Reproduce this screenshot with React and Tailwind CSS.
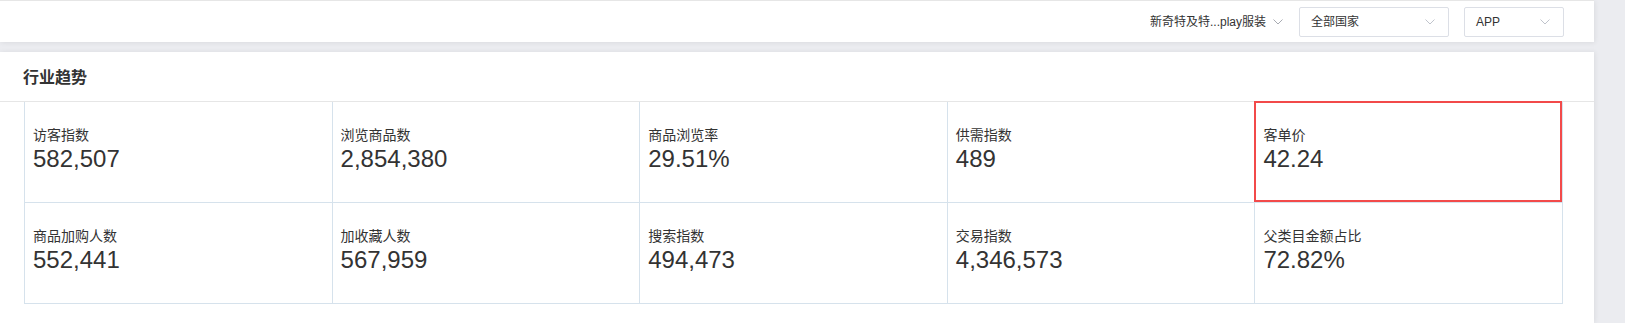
import React from "react";

const font = { fontFamily: '"Liberation Sans", "Noto Sans CJK SC", sans-serif' };

function Chevron({ color = "#c0c4cc" }) {
  return (
    <svg width="10" height="6" viewBox="0 0 10 6" fill="none">
      <path d="M0.5 0.5 L5 5 L9.5 0.5" stroke={color} strokeWidth="1" />
    </svg>
  );
}

const metrics = [
  ["访客指数", "582,507"],
  ["浏览商品数", "2,854,380"],
  ["商品浏览率", "29.51%"],
  ["供需指数", "489"],
  ["客单价", "42.24", true],
  ["商品加购人数", "552,441"],
  ["加收藏人数", "567,959"],
  ["搜索指数", "494,473"],
  ["交易指数", "4,346,573"],
  ["父类目金额占比", "72.82%"],
];

export default function App() {
  return (
    <div className="h-[323px] w-full overflow-hidden bg-[#ebecf0]" style={font}>
      <div className="flex w-[1594px] flex-col">
        <div className="flex h-[42px] items-start justify-end border-t border-[#e6e6e6] bg-white pt-[6px] pr-[30px] shadow-[1px_1px_5px_rgba(0,0,0,0.07)]">
          <div className="flex h-[30px] items-center gap-[7px] text-[12px] text-[#333]">
            <span>新奇特及特...play服装</span>
            <Chevron color="#a8abb2" />
          </div>
          <div className="ml-[16px] flex h-[30px] w-[150px] items-center justify-between rounded-[2px] border border-[#dcdfe6] pl-[11px] pr-[13px] text-[12px] text-[#333]">
            <span>全部国家</span>
            <Chevron />
          </div>
          <div className="ml-[15px] flex h-[30px] w-[100px] items-center justify-between rounded-[2px] border border-[#dcdfe6] pl-[11px] pr-[13px] text-[12px] text-[#333]">
            <span>APP</span>
            <Chevron />
          </div>
        </div>
        <div className="mt-[10px] h-[271px] bg-white shadow-[1px_0_5px_rgba(0,0,0,0.07)]">
          <div className="flex h-[50px] items-center border-b border-[#e6e6e6] pl-[23px] pt-[2px] text-[16px] font-bold text-[#333]">
            行业趋势
          </div>
          <div className="ml-[24px] mr-[31px] grid grid-cols-5 border-l border-[#d6e2ec]">
            {metrics.map(([label, value, hl]) => (
              <div
                key={label}
                className="relative h-[101px] border-r border-b border-[#d6e2ec] pl-[8px] pt-[23px] text-[#333]"
              >
                <div className="text-[14px] leading-[20px]">{label}</div>
                <div className="text-[24px] leading-[28px]">{value}</div>
                {hl && (
                  <div className="absolute -left-[1px] -top-[1px] right-0 bottom-0 border-2 border-[#f24a4a]" />
                )}
              </div>
            ))}
          </div>
        </div>
      </div>
    </div>
  );
}
